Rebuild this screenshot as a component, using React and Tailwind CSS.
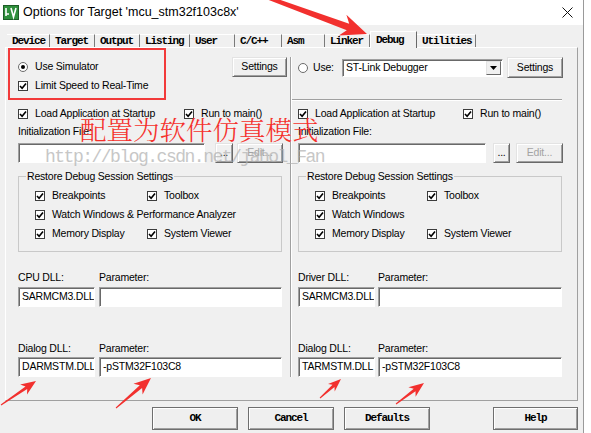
import React from 'react';

const tabs = [
  { name: 'Device', w: 'w-[43px]' },
  { name: 'Target', w: 'w-[45px]' },
  { name: 'Output', w: 'w-[45px]' },
  { name: 'Listing', w: 'w-[50px]' },
  { name: 'User', w: 'w-[45px]' },
  { name: 'C/C++', w: 'w-[47px]' },
  { name: 'Asm', w: 'w-[43px]' },
  { name: 'Linker', w: 'w-[45px]' },
  { name: 'Debug', w: 'w-[47px]', active: true },
  { name: 'Utilities', w: 'w-[59px]' },
];

function Check() {
  return (
    <span className="w-[10px] h-[10px] shrink-0 bg-white border border-[#3c3c3c] flex items-center justify-center">
      <svg width="8" height="8" viewBox="0 0 8 8">
        <path d="M1 4 L3.1 6.3 L7 1.4" fill="none" stroke="#000" strokeWidth="1.6" />
      </svg>
    </span>
  );
}

function Radio({ on }) {
  return (
    <span className="w-[10px] h-[10px] shrink-0 rounded-full bg-white border border-[#6b6b6b] flex items-center justify-center">
      {on && <span className="w-[4px] h-[4px] rounded-full bg-black" />}
    </span>
  );
}

function CheckLabel({ label }) {
  return (
    <div className="h-[19px] flex items-center gap-[7px] whitespace-nowrap">
      <Check />
      <span>{label}</span>
    </div>
  );
}

function Field({ className = '', children }) {
  return (
    <div
      className={`h-[20px] bg-white border border-t-[#a0a0a0] border-l-[#a0a0a0] border-b-white border-r-white shadow-[inset_1px_1px_0_#696969] flex items-center pl-[3px] whitespace-nowrap overflow-hidden ${className}`}
    >
      {children}
    </div>
  );
}

function Btn({ className = '', disabled, children }) {
  return (
    <div
      className={`h-[20px] flex items-center justify-center whitespace-nowrap bg-[#f0f0f0] border border-t-[#e3e3e3] border-l-[#e3e3e3] border-r-[#696969] border-b-[#696969] shadow-[inset_1px_1px_0_#fff,inset_-1px_-1px_0_#a0a0a0] ${
        disabled ? 'text-[#a3a3a3]' : ''
      } ${className}`}
    >
      {children}
    </div>
  );
}

function Group({ rows }) {
  return (
    <fieldset className="mt-[6px] w-[264px] h-[83px] border border-[#c9c9c9]">
      <legend className="ml-[7px] px-[1px] leading-[14px]">Restore Debug Session Settings</legend>
      <div className="pt-[3px] pl-[16px] flex flex-col">
        {rows.map((r, i) => (
          <div key={i} className="flex">
            <div className="w-[112px]">
              <CheckLabel label={r[0]} />
            </div>
            {r[1] && <CheckLabel label={r[1]} />}
          </div>
        ))}
      </div>
    </fieldset>
  );
}

function LowerPart({ right }) {
  return (
    <>
      <div className="h-[16px] flex items-center">
        <div className={right ? 'w-[165px]' : 'w-[166px]'}>
          <CheckLabel label="Load Application at Startup" />
        </div>
        <CheckLabel label="Run to main()" />
      </div>
      <div className="mt-[3px] h-[14px] flex items-center">Initialization File:</div>
      <div className="mt-[4px] flex">
        <Field className={right ? 'w-[188px]' : 'w-[187px]'} />
        <Btn className={right ? 'ml-[7px] w-[17px]' : 'ml-[10px] w-[18px]'}>...</Btn>
        <Btn disabled className={right ? 'ml-[6px] w-[47px]' : 'ml-[4px] w-[46px]'}>
          Edit...
        </Btn>
      </div>
      <Group
        rows={
          right
            ? [['Breakpoints', 'Toolbox'], ['Watch Windows'], ['Memory Display', 'System Viewer']]
            : [
                ['Breakpoints', 'Toolbox'],
                ['Watch Windows & Performance Analyzer'],
                ['Memory Display', 'System Viewer'],
              ]
        }
      />
      <div className="mt-[19px] h-[14px] flex items-center">
        <span className={right ? 'w-[80px]' : 'w-[81px]'}>{right ? 'Driver DLL:' : 'CPU DLL:'}</span>
        <span>Parameter:</span>
      </div>
      <div className="mt-[2px] flex">
        <Field className="w-[77px]">SARMCM3.DLL</Field>
        <Field className={right ? 'ml-[3px] w-[184px]' : 'ml-[4px] w-[183px]'} />
      </div>
      <div className="mt-[35px] h-[14px] flex items-center">
        <span className={right ? 'w-[80px]' : 'w-[81px]'}>Dialog DLL:</span>
        <span>Parameter:</span>
      </div>
      <div className="mt-[1px] flex">
        <Field className="w-[77px]">{right ? 'TARMSTM.DLL' : 'DARMSTM.DLL'}</Field>
        <Field className={right ? 'ml-[3px] w-[184px]' : 'ml-[4px] w-[183px]'}>-pSTM32F103C8</Field>
      </div>
    </>
  );
}

function arrow(x1, y1, x2, y2, head, wing, tailW, neckW) {
  const dx = x2 - x1;
  const dy = y2 - y1;
  const len = Math.hypot(dx, dy);
  const ux = dx / len;
  const uy = dy / len;
  const px = -uy;
  const py = ux;
  const bx = x2 - ux * head;
  const by = y2 - uy * head;
  const nx = x2 - ux * head * 0.78;
  const ny = y2 - uy * head * 0.78;
  const pts = [
    [x1 + (px * tailW) / 2, y1 + (py * tailW) / 2],
    [nx + (px * neckW) / 2, ny + (py * neckW) / 2],
    [bx + px * wing, by + py * wing],
    [x2, y2],
    [bx - px * wing, by - py * wing],
    [nx - (px * neckW) / 2, ny - (py * neckW) / 2],
    [x1 - (px * tailW) / 2, y1 - (py * tailW) / 2],
  ];
  return pts.map((p) => p[0].toFixed(1) + ',' + p[1].toFixed(1)).join(' ');
}

export default function App() {
  return (
    <div className="relative w-[591px] h-[433px] overflow-hidden bg-white text-black text-[10.5px] tracking-[-0.2px] font-['Liberation_Sans',Arial,sans-serif]">
      <div className="w-[584px] h-[433px] bg-[#f0f0f0] border-r border-[#9a9a9a] flex flex-col">
        {/* title bar */}
        <div className="h-[25px] shrink-0 bg-white flex items-center pl-[3px]">
          <svg width="16" height="15" viewBox="0 0 16 15">
            <rect x="0.5" y="0.5" width="15" height="14" fill="#2f8f3c" stroke="#1d5e27" />
            <path d="M3 3 L3 11 M3 9 L6 9 M8 3 L10.5 12 L13 3" fill="none" stroke="#fff" strokeWidth="1.6" />
          </svg>
          <span className="ml-[4px] text-[12.5px] tracking-normal">Options for Target 'mcu_stm32f103c8x'</span>
          <svg className="ml-auto mr-[10px]" width="11" height="11" viewBox="0 0 11 11">
            <path d="M0.5 0.5 L10.5 10.5 M10.5 0.5 L0.5 10.5" stroke="#111" strokeWidth="1" />
          </svg>
        </div>

        {/* tabs */}
        <div className="h-[22px] shrink-0 pl-[7px] flex items-end font-['Liberation_Mono',monospace] font-bold text-[11px] tracking-[-1.1px]">
          {tabs.map((t) =>
            t.active ? (
              <div
                key={t.name}
                className={`${t.w} h-[17px] -mb-px relative z-10 bg-[#f0f0f0] border-t border-l border-r border-t-white border-l-white border-r-[#696969] pl-[5px] pt-[3px] leading-[11px]`}
              >
                {t.name}
              </div>
            ) : (
              <div
                key={t.name}
                className={`${t.w} h-[13px] border-t border-r border-t-white border-r-[#7a7a7a] pl-[5px] pt-px flex items-center leading-none`}
              >
                {t.name}
              </div>
            )
          )}
        </div>

        {/* tab panel */}
        <div className="ml-[5px] w-[573px] h-[354px] shrink-0 border border-t-white border-l-white border-r-[#a0a0a0] border-b-[#a0a0a0] flex">
          <div className="w-[284px] pl-[12px] flex flex-col">
            <div className="h-[58px] pt-[9px] flex">
              <div className="w-[214px] flex flex-col">
                <div className="h-[19px] flex items-center gap-[7px]">
                  <Radio on />
                  <span>Use Simulator</span>
                </div>
                <CheckLabel label="Limit Speed to Real-Time" />
              </div>
              <Btn className="w-[55px]">Settings</Btn>
            </div>
            <LowerPart />
          </div>

          <div className="w-[2px] h-[320px] mt-[9px] border-l border-r border-l-[#a0a0a0] border-r-white" />

          <div className="w-[284px] pl-[6px] flex flex-col">
            <div className="h-[58px] pt-[9px] flex flex-col">
              <div className="h-[21px] flex items-center">
                <Radio />
                <span className="ml-[5px] w-[29px]">Use:</span>
                <div className="w-[161px] h-[18px] bg-white border border-t-[#a0a0a0] border-l-[#a0a0a0] border-b-white border-r-white shadow-[inset_1px_1px_0_#696969] flex items-center pl-[3px]">
                  <span className="flex-1">ST-Link Debugger</span>
                  <div className="w-[15px] h-[14px] mr-px bg-[#f0f0f0] border border-t-[#e3e3e3] border-l-[#e3e3e3] border-r-[#696969] border-b-[#696969] flex items-center justify-center">
                    <svg width="7" height="4" viewBox="0 0 7 4">
                      <path d="M0 0 L7 0 L3.5 4 Z" fill="#000" />
                    </svg>
                  </div>
                </div>
                <Btn className="ml-[4px] w-[56px] h-[21px]">Settings</Btn>
              </div>
              <div className="mt-[21px] -ml-[6px] w-[270px] h-[2px] border-t border-b border-t-[#a0a0a0] border-b-white" />
            </div>
            <LowerPart right />
          </div>
        </div>

        {/* bottom buttons */}
        <div className="mt-[6px] pl-[152px] flex font-['Liberation_Mono',monospace] font-bold text-[11px] tracking-[-1.1px]">
          {['OK', 'Cancel', 'Defaults'].map((b) => (
            <div
              key={b}
              className="w-[86px] h-[23px] mr-[10px] flex items-center justify-center bg-[#efefef] border border-[#6f6f6f] shadow-[inset_1px_1px_0_#fff,inset_-1px_-1px_0_#a0a0a0]"
            >
              {b}
            </div>
          ))}
          <div className="ml-[53px] w-[85px] h-[23px] flex items-center justify-center bg-[#efefef] border border-[#6f6f6f] shadow-[inset_1px_1px_0_#fff,inset_-1px_-1px_0_#a0a0a0]">
            Help
          </div>
        </div>
      </div>

      {/* annotations */}
      <div className="absolute left-[8px] top-[48px] w-[158px] h-[52px] border-2 border-[#f23a3a]" />

      <div className="absolute left-[45px] top-[148px] whitespace-nowrap leading-none text-[18px] tracking-[-1.5px] text-[#b0b0b0] opacity-70 font-['Liberation_Mono',monospace]">
        http://blog.csdn.net/jahol_Fan
      </div>

      <div className="absolute left-[80px] top-[116px] whitespace-nowrap leading-none text-[26.5px] tracking-normal font-light text-[#f5302c] font-['Noto_Serif_CJK_SC','Noto_Sans_CJK_SC',serif]">
        配置为软件仿真模式
      </div>

      <svg className="absolute left-0 top-0 pointer-events-none" width="591" height="433" viewBox="0 0 591 433">
        <g fill="#f2302e">
          <polygon points={arrow(258, -6, 367, 34, 26, 11, 3.5, 7)} />
          <polygon points={arrow(1, 405, 36, 381, 15, 6, 1, 3)} />
          <polygon points={arrow(116, 408, 151, 378, 17, 7, 1, 3.5)} />
          <polygon points={arrow(320, 398, 341, 379, 13, 5, 1, 3)} />
          <polygon points={arrow(396, 404, 424, 383, 15, 6, 1, 3)} />
        </g>
      </svg>
    </div>
  );
}
